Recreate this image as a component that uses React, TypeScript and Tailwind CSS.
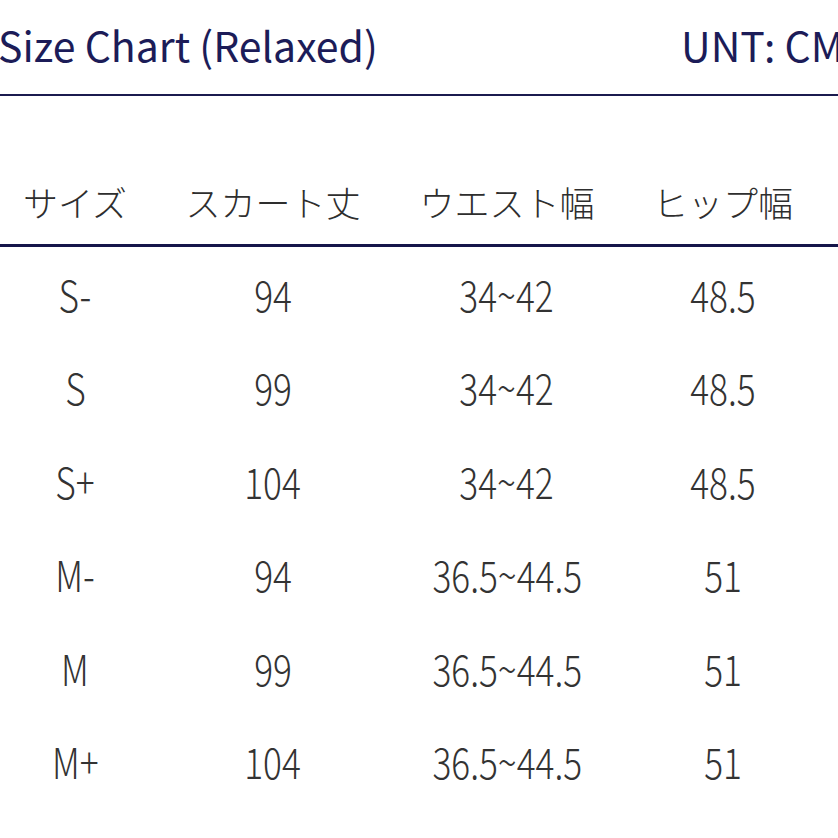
import React from "react";

const rows: [string, string, string, string][] = [
  ["S-", "94", "34~42", "48.5"],
  ["S", "99", "34~42", "48.5"],
  ["S+", "104", "34~42", "48.5"],
  ["M-", "94", "36.5~44.5", "51"],
  ["M", "99", "36.5~44.5", "51"],
  ["M+", "104", "36.5~44.5", "51"],
];

const headers = ["サイズ", "スカート丈", "ウエスト幅", "ヒップ幅"];

const cols = "grid grid-cols-[150px_246px_222px_210px]";

export default function App() {
  return (
    <div className="w-[838px] h-[838px] overflow-hidden bg-white">
      <div className="h-[94px] flex items-start justify-between pt-[16px] text-[41px] leading-[56px] text-[#1c1c58] font-['Noto_Sans_CJK_JP',sans-serif] whitespace-nowrap">
        <span className="-ml-[2px]">Size Chart (Relaxed)</span>
        <span className="-mr-[6px]">UNT: CM</span>
      </div>
      <div className="h-[2px] bg-[#1b1b4f]" />
      <div
        className={`${cols} h-[148px] items-end pb-[22px] text-[35px] leading-[40px] font-light text-[#2e2e2e] font-['Noto_Sans_CJK_JP',sans-serif]`}
      >
        {headers.map((h) => (
          <div key={h} className="text-center whitespace-nowrap">
            {h}
          </div>
        ))}
      </div>
      <div className="h-[3px] bg-[#16164a]" />
      <div className="-mt-[1px]">
        {rows.map((r, i) => (
          <div key={i} className={`${cols} h-[93.5px] items-center`}>
            {r.map((c, j) => (
              <div key={j} className="flex justify-center">
                <span className="inline-block scale-x-[0.82] text-[43px] leading-[50px] font-light text-[#333333] font-['Noto_Sans_CJK_JP',sans-serif] whitespace-nowrap">
                  {c}
                </span>
              </div>
            ))}
          </div>
        ))}
      </div>
    </div>
  );
}
